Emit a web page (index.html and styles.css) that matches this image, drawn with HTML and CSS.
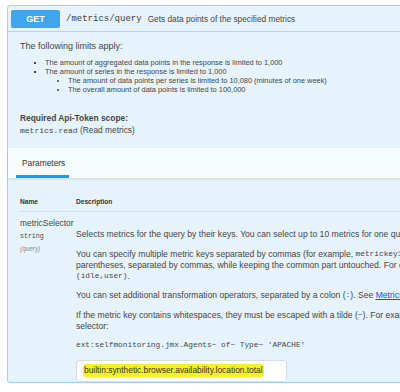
FILE: index.html
```html
<!DOCTYPE html>
<html lang="en">
<head>
  <meta charset="UTF-8">
  <title>/metrics/query</title>
  <link rel="stylesheet" href="styles.css">
</head>
<body>

  <div class="opblock">
    <!-- Summary bar -->
    <div class="opblock-summary">
      <span class="method">GET</span>
      <span class="path">/metrics/query</span>
      <span class="summary-desc">Gets data points of the specified metrics</span>
    </div>

    <!-- Description -->
    <div class="opblock-description">
      <p class="limits-title">The following limits apply:</p>
      <ul class="limits">
        <li>The amount of aggregated data points in the response is limited to 1,000</li>
        <li>The amount of series in the response is limited to 1,000
          <ul>
            <li>The amount of data points per series is limited to 10,080 (minutes of one week)</li>
            <li>The overall amount of data points is limited to 100,000</li>
          </ul>
        </li>
      </ul>
      <p class="scope-title">Required Api-Token scope:</p>
      <p class="scope"><code>metrics.read</code> (Read metrics)</p>
    </div>

    <!-- Parameters tab -->
    <div class="tab-header">
      <div class="tab active">Parameters</div>
    </div>

    <!-- Parameters table -->
    <div class="parameters">
      <div class="param-head">
        <div class="col-name">Name</div>
        <div class="col-desc">Description</div>
      </div>
      <div class="param-row">
        <div class="col-name">
          <div class="param-name">metricSelector</div>
          <div class="param-type">string</div>
          <div class="param-in">(query)</div>
        </div>
        <div class="col-desc">
          <p>Selects metrics for the query by their keys. You can select up to 10 metrics for one query.</p>
          <p>You can specify multiple metric keys separated by commas (for example, <code>metrickey1,metrickey2</code>). To select multiple metrics belonging to the same parent,<br>parentheses, separated by commas, while keeping the common part untouched. For example, to list <code>builtin:host.cpu.idle</code> and <code>builtin:host.cpu.user</code><br><code>(idle,user)</code>.</p>
          <p>You can set additional transformation operators, separated by a colon (<code>:</code>). See <a href="#">Metrics selector transformations</a> for more information.</p>
          <p>If the metric key contains whitespaces, they must be escaped with a tilde (<code>~</code>). For example, to query the metric key below you need to use the following<br>selector:</p>
          <p><code>ext:selfmonitoring.jmx.Agents~ of~ Type~ 'APACHE'</code></p>
          <div class="input-box"><span class="marked">builtin:synthetic.browser.availability.location.total</span></div>
        </div>
      </div>
    </div>
  </div>

</body>
</html>
```

FILE: styles.css
```css
/* Page */
body {
  margin: 0;
  background: #fff;
  font-family: 'Liberation Sans', Arial, sans-serif;
  color: #454646;
  overflow: hidden;
  width: 400px;
  height: 392px;
}

p {
  margin: 0;
}

code {
  font-family: 'Liberation Mono', monospace;
}

/* Operation block */
.opblock {
  margin: 5px 0 0 7px;
  width: 620px;
  border: 1px solid #9dd2f6;
  border-radius: 3px;
  background: #e7f3fc;
}

.opblock-summary {
  display: flex;
  align-items: center;
  height: 25px;
  padding: 0 3px;
  border-bottom: 1px solid #a9d7f8;
}

.method {
  width: 49px;
  height: 18px;
  line-height: 18px;
  background: #3fa6ee;
  color: #fff;
  border-radius: 2px;
  text-align: center;
  font-size: 9px;
  font-weight: bold;
}

.path {
  margin-left: 6px;
  font-family: 'Liberation Mono', monospace;
  font-size: 9px;
  color: #3d3d3d;
}

.summary-desc {
  margin-left: 6px;
  font-size: 8.3px;
  color: #454646;
}

/* Description */
.opblock-description {
  padding: 8px 12px 11px;
}

.limits-title {
  font-size: 9px;
  line-height: 12px;
}

.limits {
  margin: 6px 0 0;
  padding-left: 25px;
  font-size: 7.4px;
  line-height: 9px;
}

.limits li {
  list-style: square;
}

.limits ul {
  margin: 0;
  padding-left: 23px;
}

.limits ul li {
  list-style: disc;
}

.scope-title {
  margin-top: 18px;
  font-size: 8.4px;
  font-weight: bold;
  line-height: 12px;
}

.scope {
  font-size: 8.4px;
  line-height: 12px;
}

.scope code {
  font-size: 8px;
}

/* Tab header */
.tab-header {
  display: flex;
  height: 30px;
  padding-left: 8px;
  background: #f6fbfe;
  box-shadow: 0 1px 2px rgba(0, 0, 0, 0.12);
}

.tab {
  padding: 0 6px;
  font-size: 8.4px;
  display: flex;
  align-items: center;
  color: #333;
}

.tab.active {
  border-bottom: 3px solid #17a1ea;
  padding-top: 3px;
  width: 41px;
}

/* Parameters table */
.parameters {
  padding: 20px 12px 0;
}

.param-head {
  display: flex;
  font-size: 6.6px;
  font-weight: bold;
  color: #333;
  padding-bottom: 6px;
  border-bottom: 1px solid #cfdde8;
}

.col-name {
  width: 56px;
  flex: none;
}

.col-desc {
  flex: 1;
}

.param-row {
  display: flex;
  padding-top: 5px;
}

.param-name {
  font-size: 8.4px;
  line-height: 12px;
  white-space: nowrap;
}

.param-type {
  margin-top: 3px;
  font-family: 'Liberation Mono', monospace;
  font-size: 6.6px;
  line-height: 10px;
}

.param-in {
  margin-top: 3px;
  font-size: 6.4px;
  font-style: italic;
  color: #8a8a8a;
}

.param-row .col-desc {
  padding-top: 12px;
  font-size: 8.6px;
  line-height: 11px;
}

.param-row .col-desc p {
  margin-bottom: 8.5px;
  white-space: nowrap;
}

.param-row .col-desc code {
  font-size: 7.8px;
  line-height: 10px;
  vertical-align: top;
}

.param-row .col-desc a {
  color: #1a4fd6;
}

.input-box {
  width: 203px;
  height: 20px;
  margin-top: 3px;
  padding-left: 6px;
  display: flex;
  align-items: center;
  background: #fff;
  border: 1px solid #d8dde2;
  border-radius: 3px;
  font-size: 8.4px;
  color: #333;
}

.marked {
  background: #f7f123;
  border-radius: 3px;
  padding: 1px 1px;
}
```
